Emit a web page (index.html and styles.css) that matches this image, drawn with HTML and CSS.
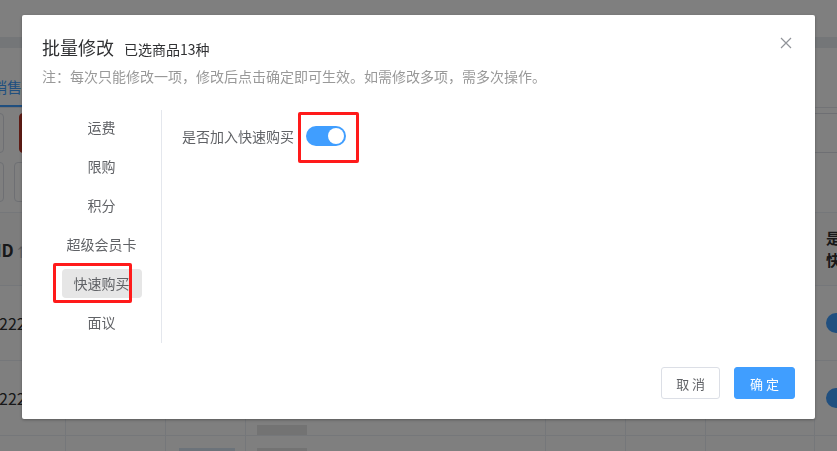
FILE: index.html
```html
<!DOCTYPE html>
<html lang="zh-CN">
<head>
  <meta charset="UTF-8">
  <title>批量修改</title>
  <link rel="stylesheet" href="styles.css">
</head>
<body>

  <div class="page">
    <div class="topbar"></div>
    <div class="band"></div>
    <div class="tabs">
      <span class="tab active">销售</span>
      <span class="tab">仓库</span>
    </div>
    <div class="toolbar">
      <span class="tool-btn"></span>
      <span class="tool-btn danger"></span>
      <span class="search">
        <svg width="14" height="14" viewBox="0 0 14 14"><circle cx="6" cy="6" r="4.5" fill="none" stroke="#666" stroke-width="1.2"/><path d="M9.3 9.3 L12.5 12.5" stroke="#666" stroke-width="1.2"/></svg>
      </span>
    </div>
    <div class="toolbar small">
      <span class="tool-btn"></span>
      <span class="tool-btn"></span>
    </div>

    <div class="table">
      <div class="cell head"><b class="id-head">ID <span class="sort">⇅</span></b></div>
      <div class="cell head"></div>
      <div class="cell head"></div>
      <div class="cell head"></div>
      <div class="cell head"></div>
      <div class="cell head"></div>
      <div class="cell head"></div>
      <div class="cell head wrap"><b>是否加入<br>快速购买</b></div>

      <div class="cell"><span class="id">22271</span></div>
      <div class="cell"></div>
      <div class="cell"></div>
      <div class="cell"></div>
      <div class="cell"></div>
      <div class="cell"></div>
      <div class="cell"></div>
      <div class="cell"><span class="mini-switch"></span></div>

      <div class="cell"><span class="id">22260</span></div>
      <div class="cell"></div>
      <div class="cell"></div>
      <div class="cell bottom"><span class="tag"></span></div>
      <div class="cell"></div>
      <div class="cell"></div>
      <div class="cell"></div>
      <div class="cell"><span class="mini-switch"></span></div>

      <div class="cell"></div>
      <div class="cell"></div>
      <div class="cell top"><span class="tag blue"></span></div>
      <div class="cell top"><span class="tag"></span></div>
      <div class="cell"></div>
      <div class="cell"></div>
      <div class="cell"></div>
      <div class="cell"></div>
    </div>
  </div>

  <div class="mask"></div>

  <div class="dialog">
    <div class="dialog-header">
      <div class="dialog-title">
        <span class="title">批量修改</span>
        <span class="subtitle">已选商品13种</span>
      </div>
      <p class="note">注：每次只能修改一项，修改后点击确定即可生效。如需修改多项，需多次操作。</p>
      <button class="close" type="button" aria-label="关闭">
        <svg width="12" height="12" viewBox="0 0 12 12"><path d="M1 1 L11 11 M11 1 L1 11" stroke="#909399" stroke-width="1.2"/></svg>
      </button>
    </div>

    <div class="dialog-body">
      <ul class="menu">
        <li><span class="menu-item">运费</span></li>
        <li><span class="menu-item">限购</span></li>
        <li><span class="menu-item">积分</span></li>
        <li><span class="menu-item">超级会员卡</span></li>
        <li><span class="menu-item active">快速购买</span></li>
        <li><span class="menu-item">面议</span></li>
      </ul>
      <div class="panel">
        <div class="form-row">
          <span class="form-label">是否加入快速购买</span>
          <span class="switch on"><span class="knob"></span></span>
        </div>
      </div>
    </div>

    <div class="dialog-footer">
      <button class="btn" type="button">取 消</button>
      <button class="btn btn-primary" type="button">确 定</button>
    </div>

    <span class="mark mark-menu"></span>
    <span class="mark mark-switch"></span>
  </div>

</body>
</html>
```

FILE: styles.css
```css
* {
  box-sizing: border-box;
}

body {
  margin: 0;
  font-family: "Noto Sans CJK SC", "Liberation Sans", sans-serif;
  color: #606266;
  overflow: hidden;
}

/* page behind the dialog */
.page {
  width: 837px;
  height: 451px;
  overflow: hidden;
  background: #fff;
}

.topbar {
  height: 37px;
}

.band {
  height: 11px;
  background: #e9ecf0;
}

.tabs {
  height: 60px;
  display: flex;
  align-items: flex-end;
  border-bottom: 1px solid #e4e7ed;
}

.tab {
  margin-left: -8px;
  padding: 0 14px 8px 0;
  font-size: 15px;
  line-height: 20px;
  color: #303133;
}

.tab.active {
  color: #409eff;
  border-bottom: 2px solid #409eff;
}

.toolbar {
  height: 45px;
  display: flex;
  align-items: flex-end;
  gap: 15px;
}

.toolbar .tool-btn {
  width: 24px;
  height: 40px;
  margin-left: -20px;
  border: 1px solid #dcdfe6;
  border-radius: 4px;
}

.toolbar .tool-btn.danger {
  width: 60px;
  margin-left: 0;
  background: #c0392b;
  border-color: #c0392b;
}

.search {
  margin-left: auto;
  width: 40px;
  height: 40px;
  display: flex;
  align-items: center;
  padding-left: 4px;
  border-top: 1px solid #dcdfe6;
  border-bottom: 1px solid #dcdfe6;
}

.toolbar.small {
  height: 49px;
  gap: 10px;
}

.toolbar.small .tool-btn {
  width: 24px;
  height: 40px;
}

.toolbar.small .tool-btn + .tool-btn {
  margin-left: 0;
  width: 40px;
}

.table {
  margin-top: 10px;
  display: grid;
  grid-template-columns: 66px 100px 80px 300px 80px 80px 109px 100px;
  grid-template-rows: 73px 75px 75px 40px;
  border-top: 1px solid #ebeef5;
}

.cell {
  border-right: 1px solid #ebeef5;
  border-bottom: 1px solid #ebeef5;
  display: flex;
  align-items: center;
  padding-left: 11px;
  font-size: 15px;
  color: #303133;
}

.cell.head {
  background: #fafafa;
}

.cell.wrap b {
  font-size: 15px;
  line-height: 22px;
  white-space: nowrap;
  color: #303133;
}

.id-head {
  margin-left: -15px;
  font-size: 17px;
}

.sort {
  font-weight: normal;
  font-size: 13px;
  color: #b0b3b8;
}

.id {
  margin-left: -12px;
  font-size: 16px;
}

.mini-switch {
  width: 40px;
  height: 20px;
  border-radius: 10px;
  background: #409eff;
}

.cell.bottom {
  align-items: flex-end;
}

.cell.top {
  align-items: flex-start;
}

.tag {
  width: 50px;
  height: 10px;
  background: #e6e6e6;
}

.tag.blue {
  width: 56px;
  background: #d9e6f5;
  margin-top: 12px;
  margin-left: 2px;
}

.cell.top .tag:not(.blue) {
  margin-top: 12px;
}

/* overlay */
.mask {
  position: fixed;
  inset: 0;
  background: rgba(0, 0, 0, 0.5);
}

.dialog {
  position: absolute;
  left: 22px;
  top: 15px;
  width: 793px;
  height: 404px;
  display: flex;
  flex-direction: column;
  background: #fff;
  border-radius: 2px;
  box-shadow: 0 1px 3px rgba(0, 0, 0, 0.3);
}

.dialog-header {
  position: relative;
  padding: 20px 20px 0;
}

.dialog-title {
  display: flex;
  align-items: baseline;
  line-height: 24px;
}

.title {
  font-size: 18px;
  color: #303133;
}

.subtitle {
  margin-left: 10px;
  font-size: 14px;
  color: #303133;
}

.note {
  margin: 5px 0 0;
  font-size: 14px;
  line-height: 20px;
  color: #999;
}

.close {
  position: absolute;
  top: 22px;
  right: 23px;
  width: 12px;
  height: 12px;
  padding: 0;
  border: 0;
  background: none;
  display: flex;
}

.dialog-body {
  display: flex;
  margin-top: 24px;
  padding: 0 20px;
}

.menu {
  list-style: none;
  margin: 0;
  padding: 3px 0 6px;
  width: 120px;
  border-right: 1px solid #e4e7ed;
  display: flex;
  flex-direction: column;
  gap: 10px;
}

.menu li {
  display: flex;
  justify-content: center;
}

.menu-item {
  padding: 0 12px;
  height: 29px;
  line-height: 29px;
  font-size: 14px;
  color: #606266;
  border-radius: 4px;
}

.menu-item.active {
  background: #e6e6e6;
}

.panel {
  flex: 1;
  padding: 16px 0 0 20px;
}

.form-row {
  display: flex;
  align-items: center;
  gap: 12px;
}

.form-label {
  font-size: 14px;
  line-height: 20px;
  color: #606266;
}

.switch {
  position: relative;
  width: 40px;
  height: 20px;
  border-radius: 10px;
  background: #dcdfe6;
}

.switch.on {
  background: #409eff;
}

.switch .knob {
  position: absolute;
  top: 2px;
  left: 2px;
  width: 16px;
  height: 16px;
  border-radius: 50%;
  background: #fff;
}

.switch.on .knob {
  left: 22px;
}

.dialog-footer {
  margin-top: auto;
  padding: 0 20px 20px;
  display: flex;
  justify-content: flex-end;
  gap: 14px;
}

.btn {
  height: 32px;
  padding: 0 14px;
  font-family: inherit;
  font-size: 13px;
  color: #606266;
  background: #fff;
  border: 1px solid #dcdfe6;
  border-radius: 3px;
}

.btn-primary {
  padding: 0 15px;
  color: #fff;
  background: #409eff;
  border-color: #409eff;
}

/* red annotation boxes */
.mark {
  position: absolute;
  border: 3px solid #ff1a1a;
  border-radius: 2px;
}

.mark-menu {
  left: 31px;
  top: 248px;
  width: 79px;
  height: 40px;
}

.mark-switch {
  left: 276px;
  top: 97px;
  width: 61px;
  height: 51px;
}
```
